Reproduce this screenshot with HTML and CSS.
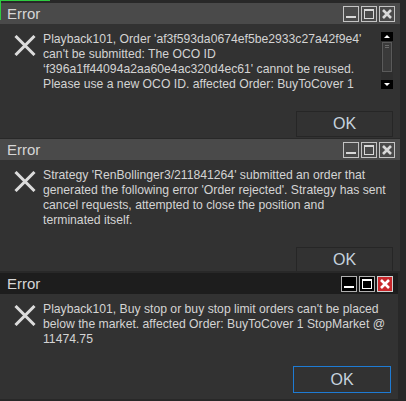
FILE: index.html
```html
<!DOCTYPE html>
<html>
<head>
<meta charset="utf-8">
<link rel="stylesheet" href="styles.css">
</head>
<body>
<div class="corner"></div>
<div class="stack">
  <div class="dialog d1">
    <div class="titlebar">
      <span class="title">Error</span>
      <div class="tbtns">
        <span class="tb min"><i></i></span>
        <span class="tb max"><i></i></span>
        <span class="tb close"><svg width="12" height="12" viewBox="0 0 12 12"><path d="M2 2L10 10M10 2L2 10" stroke="currentColor" stroke-width="2.6"/></svg></span>
      </div>
    </div>
    <div class="content">
      <svg class="icon" width="22" height="21" viewBox="0 0 22 21"><path d="M1.5 1L20.5 20M20.5 1L1.5 20" stroke="#dcdcdc" stroke-width="3"/></svg>
      <div class="msg scrolled">
        <span>Playback101, Order 'af3f593da0674ef5be2933c27a42f9e4'</span>
        <span>can't be submitted: The OCO ID</span>
        <span>‘f396a1ff44094a2aa60e4ac320d4ec61' cannot be reused.</span>
        <span>Please use a new OCO ID. affected Order: BuyToCover 1</span>
      </div>
      <div class="scrollbar">
        <span class="sarrow up"></span>
        <span class="thumb"></span>
        <span class="track"></span>
        <span class="sarrow down"></span>
      </div>
    </div>
    <div class="footer"><button class="ok">OK</button></div>
  </div>

  <div class="dialog d2">
    <div class="titlebar">
      <span class="title">Error</span>
      <div class="tbtns">
        <span class="tb min"><i></i></span>
        <span class="tb max"><i></i></span>
        <span class="tb close"><svg width="12" height="12" viewBox="0 0 12 12"><path d="M2 2L10 10M10 2L2 10" stroke="currentColor" stroke-width="2.6"/></svg></span>
      </div>
    </div>
    <div class="content">
      <svg class="icon" width="22" height="21" viewBox="0 0 22 21"><path d="M1.5 1L20.5 20M20.5 1L1.5 20" stroke="#dcdcdc" stroke-width="3"/></svg>
      <div class="msg">
        <span>Strategy 'RenBollinger3/211841264' submitted an order that</span>
        <span>generated the following error 'Order rejected'. Strategy has sent</span>
        <span>cancel requests, attempted to close the position and</span>
        <span>terminated itself.</span>
      </div>
    </div>
    <div class="footer"><button class="ok">OK</button></div>
  </div>

  <div class="dialog d3 active">
    <div class="titlebar">
      <span class="title">Error</span>
      <div class="tbtns">
        <span class="tb min"><i></i></span>
        <span class="tb max"><i></i></span>
        <span class="tb close"><svg width="12" height="12" viewBox="0 0 12 12"><path d="M2 2L10 10M10 2L2 10" stroke="currentColor" stroke-width="2.6"/></svg></span>
      </div>
    </div>
    <div class="content">
      <svg class="icon" width="22" height="21" viewBox="0 0 22 21"><path d="M1.5 1L20.5 20M20.5 1L1.5 20" stroke="#dcdcdc" stroke-width="3"/></svg>
      <div class="msg">
        <span>Playback101, Buy stop or buy stop limit orders can't be placed</span>
        <span>below the market. affected Order: BuyToCover 1 StopMarket @</span>
        <span>11474.75</span>
      </div>
    </div>
    <div class="footer"><button class="ok">OK</button></div>
  </div>
</div>
</body>
</html>
```

FILE: styles.css
```css
html, body {
  margin: 0;
  padding: 0;
}
body {
  width: 406px;
  height: 401px;
  overflow: hidden;
  background: #282828;
  font-family: "Liberation Sans", Arial, sans-serif;
  position: relative;
}
.corner {
  position: absolute;
  left: 0;
  top: 0;
  width: 50px;
  height: 20px;
  border-top: 1px solid #2ecc40;
  border-left: 1px solid #2ecc40;
  box-sizing: border-box;
}
.stack {
  display: flex;
  flex-direction: column;
  gap: 1px;
  padding-top: 3px;
  width: 400px;
}
.dialog {
  background: #323232;
  display: flex;
  flex-direction: column;
  overflow: hidden;
}
.d1 { height: 135px; }
.d2 { height: 132px; }
.d3 { height: 126px; width: 398px; margin-top: 1px; }

.titlebar {
  height: 21px;
  flex: none;
  background: #4a4a4a;
  display: flex;
  align-items: center;
  justify-content: space-between;
  padding: 0 5px 0 7px;
}
.active .titlebar { background: #1d1d1d; }
.title {
  color: #d6d6d6;
  font-size: 15px;
  line-height: 21px;
}
.tbtns {
  display: flex;
  gap: 2px;
}
.tb {
  width: 16px;
  height: 16px;
  box-sizing: border-box;
  border: 1px solid #c4c4c4;
  display: flex;
  align-items: center;
  justify-content: center;
  color: #d8d8d8;
  position: relative;
}
.tb.min i {
  display: block;
  width: 10px;
  height: 2px;
  background: #d8d8d8;
  margin-top: 7px;
}
.tb.max i {
  display: block;
  width: 10px;
  height: 10px;
  box-sizing: border-box;
  border: 1px solid #d8d8d8;
  border-top-width: 2px;
}
.active .tb {
  background: #000;
  border-color: #b0b0b0;
  color: #fff;
}
.active .tb.min i { background: #fff; }
.active .tb.max i { border-color: #fff; }
.active .tb.close {
  background: #c8282c;
  border-color: #d0d0d0;
}

.content {
  display: flex;
  padding: 8px 7px 0 14px;
  height: 60px;
  flex: none;
}
.icon {
  flex: none;
  margin-top: 3px;
  margin-right: 7px;
}
.msg {
  display: flex;
  flex-direction: column;
  color: #d4d4d4;
  font-size: 12.2px;
  line-height: 15px;
  white-space: nowrap;
  flex: 1;
}
.scrollbar {
  width: 12px;
  height: 57px;
  display: flex;
  flex-direction: column;
  flex: none;
  background: #2e2e2e;
}
.sarrow {
  height: 9px;
  background: #000;
  position: relative;
  flex: none;
}
.sarrow::after {
  content: "";
  position: absolute;
  left: 3px;
  top: 3px;
  border-left: 3px solid transparent;
  border-right: 3px solid transparent;
}
.sarrow.up::after { border-bottom: 3px solid #fff; }
.sarrow.down::after { border-top: 3px solid #fff; }
.thumb {
  height: 30px;
  margin: 1px 1px 0;
  box-sizing: border-box;
  border: 1px solid #5a5a5a;
  background: #3a3a3a;
  flex: none;
  position: relative;
}
.thumb::before {
  content: "";
  position: absolute;
  left: 2px;
  right: 2px;
  top: 2px;
  height: 1px;
  border-top: 1px solid #6a6a6a;
  border-bottom: 1px solid #6a6a6a;
}
.track { flex: 1; }

.footer {
  display: flex;
  justify-content: flex-end;
  padding-right: 7px;
  flex: none;
}
.d1 .footer { margin-top: 19px; }
.d2 .footer { margin-top: 19px; }
.d3 .footer { margin-top: 4px; }
.ok {
  width: 97px;
  height: 26px;
  background: #323232;
  border: 1px solid #262626;
  color: #c6d2de;
  font-family: "Liberation Sans", Arial, sans-serif;
  font-size: 16px;
  padding: 0;
}
.active .ok {
  border-color: #1e7bd4;
  width: 98px;
  height: 27px;
}
```
